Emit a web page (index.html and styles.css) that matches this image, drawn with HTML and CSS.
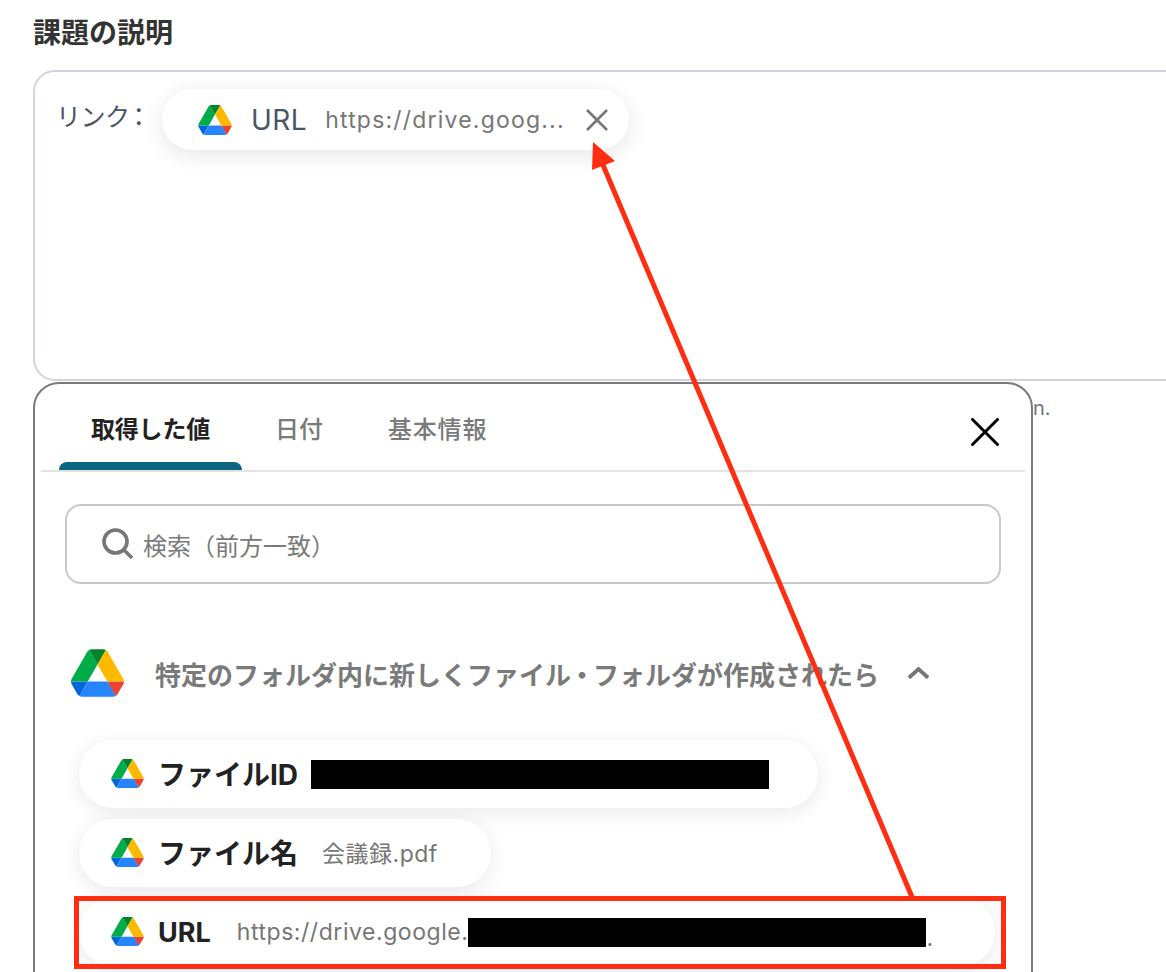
FILE: index.html
```html
<!DOCTYPE html>
<html lang="ja">
<head>
<meta charset="utf-8">
<title>課題の説明</title>
<link rel="stylesheet" href="styles.css">
</head>
<body>
<svg class="defs" width="0" height="0" aria-hidden="true">
  <symbol id="drive" viewBox="0 0 87.3 78">
    <path d="m6.6 66.85 3.85 6.65c.8 1.4 1.95 2.5 3.3 3.3l13.75-23.8h-27.5c0 1.55.4 3.1 1.2 4.5z" fill="#0066da"/>
    <path d="m43.65 25-13.75-23.8c-1.35.8-2.5 1.9-3.3 3.3l-25.4 44a9.06 9.06 0 0 0 -1.2 4.5h27.5z" fill="#00ac47"/>
    <path d="m73.55 76.8c1.35-.8 2.5-1.9 3.3-3.3l1.6-2.75 7.65-13.25c.8-1.4 1.2-2.95 1.2-4.5h-27.502l5.852 11.5z" fill="#ea4335"/>
    <path d="m43.65 25 13.75-23.8c-1.35-.8-2.9-1.2-4.5-1.2h-18.5c-1.6 0-3.15.45-4.5 1.2z" fill="#00832d"/>
    <path d="m59.8 53h-32.3l-13.75 23.8c1.35.8 2.9 1.2 4.5 1.2h50.8c1.6 0 3.15-.45 4.5-1.2z" fill="#2684fc"/>
    <path d="m73.4 26.5-12.7-22c-.8-1.4-1.95-2.5-3.3-3.3l-13.75 23.8 16.15 28h27.45c0-1.55-.4-3.1-1.2-4.5z" fill="#ffba00"/>
  </symbol>
</svg>

<main class="page">
  <h1 class="title">課題の説明</h1>
  <div class="editor">
    <span class="editor-label">リンク<span class="editor-colon">：</span></span>
    <span class="token">
      <svg class="token-icon"><use href="#drive"/></svg>
      <span class="token-name">URL</span>
      <span class="token-value">https://drive.goog...</span>
      <svg class="token-close" viewBox="0 0 24 24"><path d="M2 2 22 22M22 2 2 22"/></svg>
    </span>
  </div>
  <p class="hint">n.</p>

  <section class="popup">
    <div class="tabs">
      <span class="tab tab-active">取得した値</span>
      <span class="tab">日付</span>
      <span class="tab tab-info">基本情報</span>
      <svg class="popup-close" viewBox="0 0 28 28"><path d="M1.5 1.5 26.5 26.5M26.5 1.5 1.5 26.5"/></svg>
    </div>
    <div class="search">
      <svg class="search-icon" viewBox="0 0 32 32"><circle cx="13.5" cy="13.5" r="11.5"/><path d="M22 22 30 30"/></svg>
      <span>検索（前方一致）</span>
    </div>
    <div class="group">
      <svg class="group-icon"><use href="#drive"/></svg>
      <span class="group-title">特定のフォルダ内に新しくファイル<span class="dot">・</span>フォルダが作成されたら</span>
      <svg class="chevron" viewBox="0 0 24 14"><path d="M2 12 12 3 22 12"/></svg>
    </div>
    <ul class="chips">
      <li class="chip chip-id">
        <svg class="chip-icon"><use href="#drive"/></svg>
        <span class="chip-name">ファイルID</span>
        <span class="mask mask-id"></span>
      </li>
      <li class="chip chip-file">
        <svg class="chip-icon"><use href="#drive"/></svg>
        <span class="chip-name">ファイル名</span>
        <span class="chip-value">会議録.pdf</span>
      </li>
      <li class="chip chip-url">
        <svg class="chip-icon"><use href="#drive"/></svg>
        <span class="chip-name chip-name-url">URL</span>
        <span class="chip-value">https://drive.google.</span>
        <span class="mask mask-url"></span>
        <span class="chip-value">.</span>
      </li>
    </ul>
  </section>

  <div class="highlight"></div>
  <svg class="arrow" viewBox="0 0 1166 972" width="1166" height="972">
    <path class="arrow-line" d="M912 897 603 165"/>
    <path class="arrow-head" d="M593 142 615 161 592 170z"/>
  </svg>
</main>
</body>
</html>
```
FILE: styles.css
```css
* { box-sizing: border-box; }
html, body { margin: 0; height: 100%; background: #fff; }
body { overflow: hidden; font-family: Inter, "Noto Sans CJK JP", sans-serif; }
.defs { position: absolute; }
.page { position: relative; width: 1166px; height: 972px; overflow: hidden; padding: 15px 0 0 33px; }

.title { margin: 0 0 18px; font-size: 28px; line-height: 37px; font-weight: 700; color: #333; }

.editor { width: 1200px; height: 311px; border: 2px solid #d0d4dc; border-radius: 22px; padding: 17px 0 0 21px; display: flex; align-items: flex-start; }
.editor-label { font-size: 25px; line-height: 56px; height: 56px; color: #4b5563; width: 106px; flex: none; letter-spacing: -.5px; white-space: nowrap; }
.editor-colon { font-feature-settings: "palt"; margin-left: 3px; }
.token { display: flex; align-items: center; height: 61px; width: 467px; padding: 0 20px 0 36px; background: #fff; border-radius: 31px; box-shadow: 0 5px 22px rgba(0,0,0,.1); }
.token-icon { width: 34px; height: 30px; flex: none; }
.token-name { margin-left: 19px; font-size: 28px; letter-spacing: .5px; color: #4b5563; }
.token-value { margin-left: 18px; font-size: 23px; color: #767676; letter-spacing: 1.2px; white-space: nowrap; }
.token-close { width: 24px; height: 24px; margin-left: 20px; flex: none; fill: none; stroke: #767676; stroke-width: 2.6; }

.hint { margin: 13px 0 0 1000px; font-size: 20px; line-height: 28px; color: #6b7280; }

.popup { position: absolute; left: 33px; top: 382px; width: 1000px; height: 640px; background: #fff; border: 2px solid #7a7a7a; border-radius: 26px; padding: 0 6px; }
.tabs { position: relative; display: flex; gap: 65px; height: 88px; padding: 25px 0 0 50px; border-bottom: 2px solid #e3e3e3; }
.tab { font-size: 24px; line-height: 42px; font-weight: 500; color: #7a7a7a; height: 42px; }
.tab-info { letter-spacing: .8px; }
.tab-active { font-weight: 700; color: #222; letter-spacing: -.2px; }
.tab-active::after { content: ""; position: absolute; left: 18px; bottom: 0; width: 183px; height: 8px; background: #0d6680; border-radius: 8px 8px 0 0; }
.popup-close { position: absolute; right: 26px; top: 34px; width: 28px; height: 28px; fill: none; stroke: #000; stroke-width: 3; stroke-linecap: round; }

.search { display: flex; align-items: center; gap: 9px; height: 80px; margin: 32px 24px 0 24px; padding-left: 35px; border: 2px solid #c9c9c9; border-radius: 16px; font-size: 24px; color: #7a7a7a; }
.search-icon { width: 32px; height: 32px; fill: none; stroke: #767676; stroke-width: 3.6; flex: none; }

.group { display: flex; align-items: center; height: 48px; margin: 65px 0 0 30px; }
.group-icon { width: 53px; height: 48px; flex: none; }
.group-title { margin-left: 31px; font-size: 26px; font-weight: 700; color: #7a7a7a; white-space: nowrap; }
.dot { font-feature-settings: "palt"; margin: 0 4.5px; }
.chevron { width: 23px; height: 14px; margin-left: 28px; flex: none; fill: none; stroke: #767676; stroke-width: 4; }

.chips { list-style: none; margin: 43px 0 0 38px; padding: 0; display: flex; flex-direction: column; align-items: flex-start; gap: 11px; }
.chip { display: flex; align-items: center; height: 68px; padding-left: 32px; background: #fff; border-radius: 34px; box-shadow: 0 4px 20px rgba(0,0,0,.09); }
.chip-id { width: 739px; }
.chip-file { width: 412px; }
.chip-url { width: 916px; }
.chip-icon { width: 33px; height: 29px; margin-top: -2px; flex: none; }
.chip-name { margin-left: 14px; font-size: 28px; font-weight: 700; color: #222; white-space: nowrap; }
.chip-id .chip-name, .chip-file .chip-name, .chip-file .chip-value { margin-top: -2px; }
.chip-name-url { font-size: 27px; }
.chip-value { margin-left: 24px; font-size: 23px; color: #767676; white-space: nowrap; letter-spacing: .5px; }
.chip-url .chip-value { margin-left: 26px; letter-spacing: .55px; }
.mask { display: block; background: #000; height: 29px; flex: none; }
.mask-id { width: 458px; margin-left: 13px; }
.mask-url { width: 458px; margin-left: 0; }
.chip-url .mask-url + .chip-value { margin-left: 0; align-self: flex-end; margin-bottom: 14px; }

.highlight { position: absolute; left: 74px; top: 896px; width: 932px; height: 73px; border: 5px solid #ff2d12; }
.arrow { position: absolute; left: 0; top: 0; pointer-events: none; }
.arrow-line { stroke: #ff2d12; stroke-width: 5; fill: none; }
.arrow-head { fill: #ff2d12; }
```
